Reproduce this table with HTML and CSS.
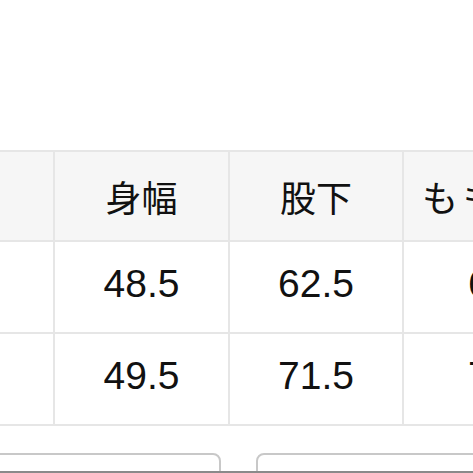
FILE: index.html
```html
<!DOCTYPE html>
<html lang="ja">
<head>
<meta charset="utf-8">
<link rel="stylesheet" href="styles.css">
</head>
<body>
<div class="page">
  <div class="table">
    <div class="cell head">着丈</div>
    <div class="cell head">身幅</div>
    <div class="cell head">股下</div>
    <div class="cell head wide">もも周り</div>
    <div class="cell num">98.0</div>
    <div class="cell num">48.5</div>
    <div class="cell num">62.5</div>
    <div class="cell num">62.0</div>
    <div class="cell num">99.0</div>
    <div class="cell num">49.5</div>
    <div class="cell num">71.5</div>
    <div class="cell num">71.0</div>
  </div>
  <div class="buttons">
    <div class="btn"></div>
    <div class="btn"></div>
  </div>
</div>
<div class="bottombar"></div>
</body>
</html>
```
FILE: styles.css
```css
html, body {
  margin: 0;
  padding: 0;
  background: #ffffff;
}
.page {
  width: 473px;
  height: 473px;
  overflow: hidden;
  padding-top: 150px;
  box-sizing: border-box;
  font-family: "Liberation Sans", "Noto Sans CJK JP", sans-serif;
  color: #111111;
}
.table {
  display: grid;
  grid-template-columns: 280px 173px 172px 204px;
  grid-template-rows: 88px 90px 90px;
  gap: 2px;
  padding: 2px;
  background: #e6e6e6;
  width: max-content;
  margin-left: -229px;
}
.cell {
  background: #ffffff;
  display: flex;
  align-items: center;
  justify-content: center;
}
.head {
  background: #f6f6f6;
  font-family: "Noto Sans CJK JP", sans-serif;
  font-size: 36px;
}
.wide {
  letter-spacing: 5px;
  padding-right: 4px;
}
.num {
  font-size: 39px;
  padding-bottom: 6px;
  box-sizing: border-box;
}
.buttons {
  display: flex;
  gap: 35px;
  margin-top: 27px;
  margin-left: -20px;
}
.btn {
  width: 241px;
  height: 60px;
  border: 2px solid #c8c8c8;
  border-radius: 8px;
  box-sizing: border-box;
  flex: none;
}
.bottombar {
  position: fixed;
  left: 0;
  right: 0;
  bottom: 0;
  height: 2px;
  background: #8a8a8a;
}
```
